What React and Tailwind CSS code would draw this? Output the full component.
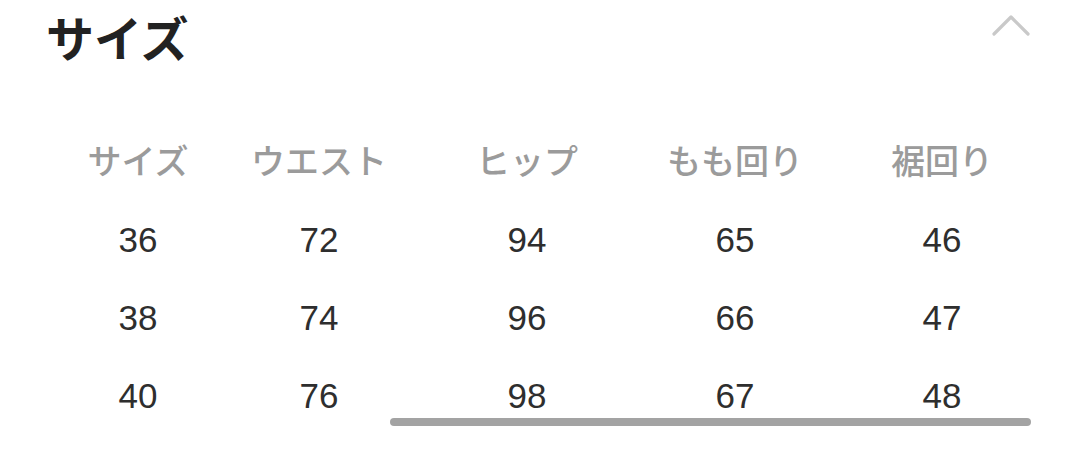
import React from "react";

const headers = ["サイズ", "ウエスト", "ヒップ", "もも回り", "裾回り"];
const rows = [
  ["36", "72", "94", "65", "46"],
  ["38", "74", "96", "66", "47"],
  ["40", "76", "98", "67", "48"],
];

export default function App() {
  return (
    <div className="w-[1080px] h-[467px] bg-white overflow-hidden" style={{ fontFamily: '"Noto Sans CJK JP", "Noto Sans", sans-serif' }}>
      <div className="flex items-start justify-between pl-[46px] pr-[48px] h-[74px] pt-[12px]">
        <h2 className="text-[48px] font-bold text-[#222] leading-none">サイズ</h2>
        <svg width="40" height="22" viewBox="0 0 40 22" className="mt-[2px]">
          <polyline points="2,20 19,3 36,20" fill="none" stroke="#c9c9c9" strokeWidth="3.2" strokeLinecap="round" strokeLinejoin="round" />
        </svg>
      </div>
      <div className="pl-[48px] pt-[47px]">
        <div className="grid grid-cols-[180px_182px_234px_182px_232px] h-[78px] items-center">
          {headers.map((h) => (
            <div key={h} className="text-center text-[34px] font-medium text-[#9b9b9b] leading-none">{h}</div>
          ))}
        </div>
        {rows.map((r, i) => (
          <div key={i} className="grid grid-cols-[180px_182px_234px_182px_232px] h-[78px] items-center">
            {r.map((v, j) => (
              <div key={j} className="text-center text-[35px] text-[#2e2e2e] leading-none pt-[2px]" style={{ fontFamily: '"Liberation Sans", Arial, sans-serif' }}>{v}</div>
            ))}
          </div>
        ))}
        <div className="ml-[342px] mt-[-15px] w-[641px] h-[8px] rounded-full bg-[#a3a3a3]" />
      </div>
    </div>
  );
}
